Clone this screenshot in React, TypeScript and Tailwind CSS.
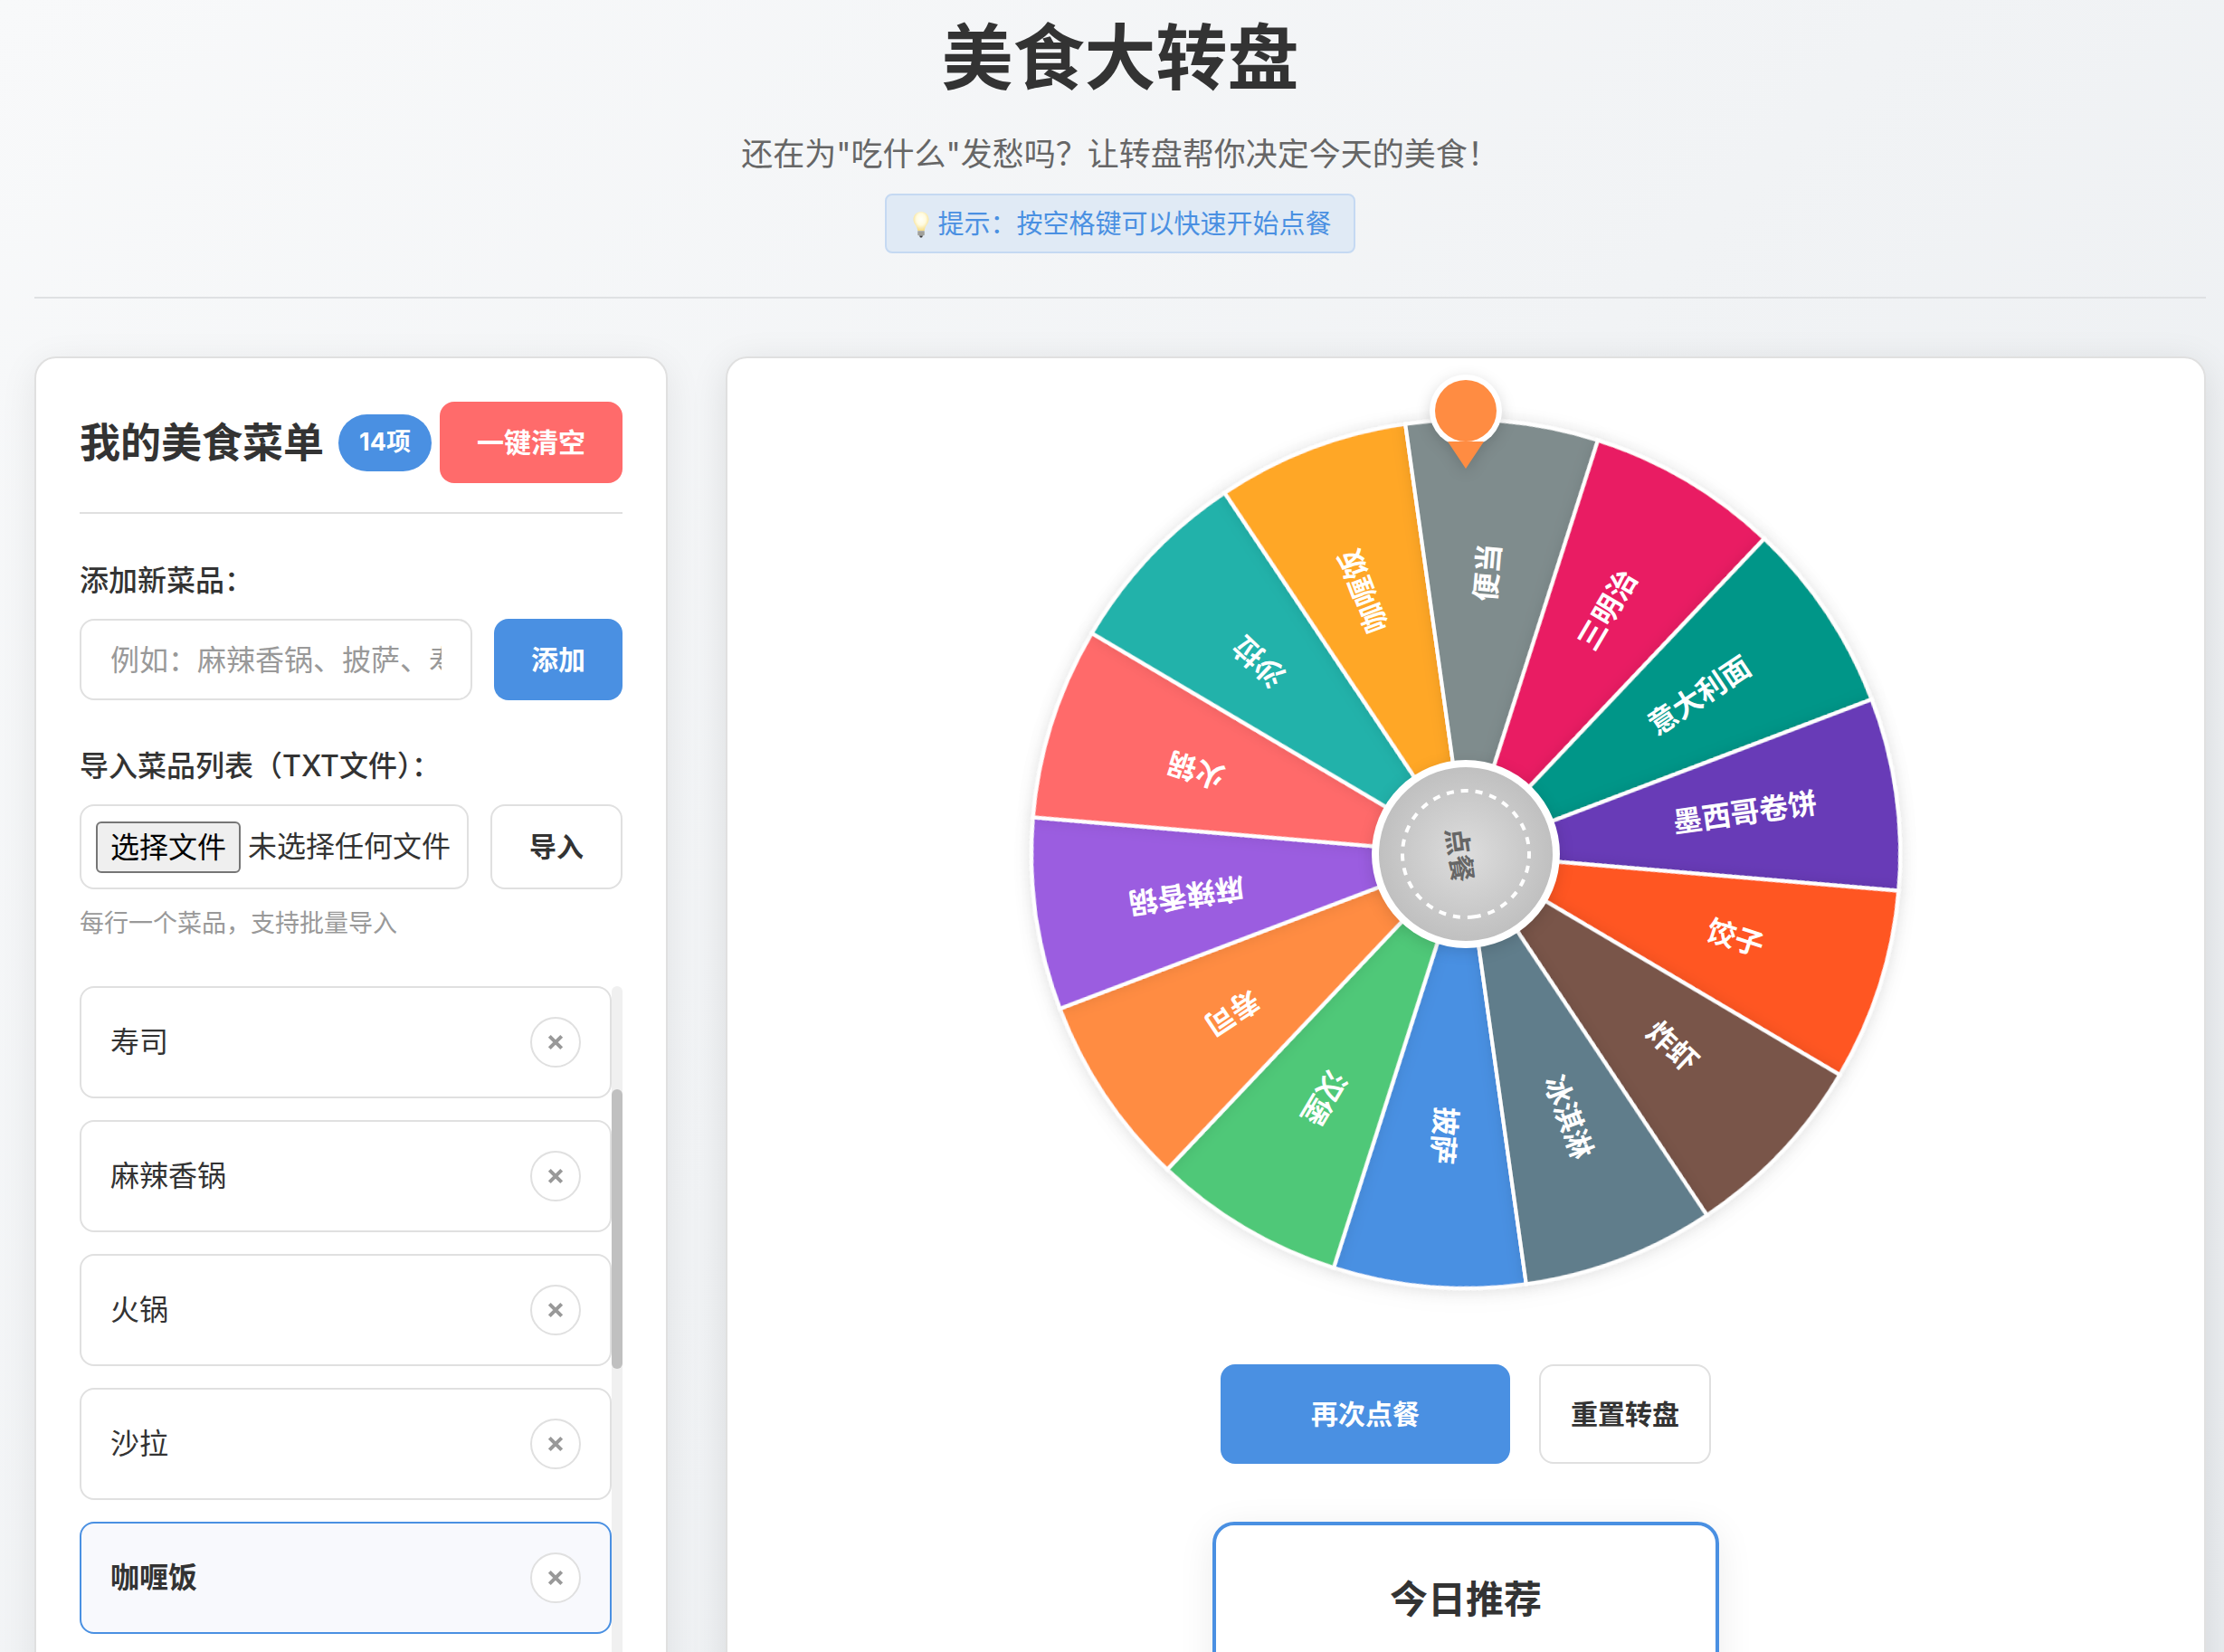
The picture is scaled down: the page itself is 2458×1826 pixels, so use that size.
import { useEffect, useRef, useState } from 'react';

const MENU: { name: string; color: string }[] = [
  { name: '披萨', color: '#4a90e2' },
  { name: '汉堡', color: '#50c878' },
  { name: '寿司', color: '#ff8c42' },
  { name: '麻辣香锅', color: '#9b5de0' },
  { name: '火锅', color: '#ff6b6b' },
  { name: '沙拉', color: '#20b2aa' },
  { name: '咖喱饭', color: '#ffa726' },
  { name: '便当', color: '#7f8c8d' },
  { name: '三明治', color: '#e91e63' },
  { name: '意大利面', color: '#009688' },
  { name: '墨西哥卷饼', color: '#673ab7' },
  { name: '饺子', color: '#ff5722' },
  { name: '炸虾', color: '#795548' },
  { name: '冰淇淋', color: '#607d8b' },
];

const SLICE = 360 / MENU.length;
const WHEEL_RADIUS = 480;

function polar(radius: number, degrees: number) {
  const rad = (degrees * Math.PI) / 180;
  return { x: radius * Math.cos(rad), y: radius * Math.sin(rad) };
}

function slicePath(index: number) {
  const a = polar(WHEEL_RADIUS, index * SLICE);
  const b = polar(WHEEL_RADIUS, (index + 1) * SLICE);
  return `M0 0L${a.x} ${a.y}A${WHEEL_RADIUS} ${WHEEL_RADIUS} 0 0 1 ${b.x} ${b.y}Z`;
}

function BulbIcon() {
  return (
    <svg className="w-7 h-8 shrink-0" viewBox="0 0 20 32" aria-hidden="true">
      <defs>
        <radialGradient id="bulb" cx="0.5" cy="0.4" r="0.6">
          <stop offset="0" stopColor="#fffff8" />
          <stop offset="0.5" stopColor="#fffbe0" />
          <stop offset="1" stopColor="#f6dc84" />
        </radialGradient>
      </defs>
      <path d="M10 2C5 2 1.500 5.800 1.500 10.600C1.500 15.500 5.600 17.500 6.300 23H13.700C14.400 17.500 18.500 15.500 18.500 10.600C18.500 5.800 15 2 10 2Z" fill="url(#bulb)" />
      <path d="M6.300 23H13.700V27C13.700 28 13 28.500 12.500 28.500H7.500C7 28.500 6.300 28 6.300 27Z" fill="#b4b4b0" />
      <path d="M6.300 25H13.700M6.300 27H13.700" stroke="#84847c" strokeWidth="0.800" />
      <path d="M8 28.500H12L11 30.500H9Z" fill="#3c3c3c" />
    </svg>
  );
}

function Wheel({ rotation }: { rotation: number }) {
  return (
    <svg className="w-[960px] max-w-full overflow-visible" viewBox="-480 -480 960 960" role="img" aria-label="美食大转盘">
      <defs>
        <radialGradient id="hub">
          <stop offset="0" stopColor="#dddddd" />
          <stop offset="1" stopColor="#c0c0c0" />
        </radialGradient>
        <filter id="slice-shadow" x="-20%" y="-20%" width="140%" height="140%">
          <feDropShadow dx="0" dy="0" stdDeviation="8" floodColor="#000" floodOpacity="0.1" />
        </filter>
      </defs>
      <circle r="480" fill="#fff" className="drop-shadow-[0_8px_12px_rgba(0,0,0,0.04)]" />
      <g transform={`rotate(${rotation})`}>
        {MENU.map((item, i) => (
          <path key={item.name} d={slicePath(i)} fill={item.color} stroke="#fff" strokeWidth="4" filter="url(#slice-shadow)" />
        ))}
        {MENU.map((item, i) => (
          <g key={item.name} transform={`rotate(${(i + 0.5) * SLICE})`}>
            <text x="312" y="9" textAnchor="middle" fill="#fff" className="text-[32px] font-bold">{item.name}</text>
          </g>
        ))}
      </g>
      <circle r="104" fill="#fff" className="drop-shadow-[0_4px_8px_rgba(0,0,0,0.12)]" />
      <g transform={`rotate(${rotation})`}>
        <circle r="96" fill="url(#hub)" />
        <circle r="70" fill="none" stroke="#fff" strokeWidth="4" strokeDasharray="8 8" />
        <text y="18" textAnchor="middle" fill="#666" className="text-[30px] font-bold">点餐</text>
      </g>
    </svg>
  );
}

function Pointer() {
  return (
    <svg className="absolute left-1/2 -top-[50px] w-20 h-[104px] -translate-x-1/2 overflow-visible drop-shadow-[0_4px_8px_rgba(0,0,0,0.15)]" viewBox="0 0 80 104" aria-hidden="true">
      <circle cx="40" cy="40" r="40" fill="#fff" />
      <circle cx="40" cy="40" r="34" fill="#ff8c42" />
      <path d="M20 74H60L40 104Z" fill="#ff8c42" />
    </svg>
  );
}

function MenuRow({ name, active }: { name: string; active: boolean }) {
  return (
    <li
      className={`flex items-center justify-between h-[124px] shrink-0 px-8 border-2 rounded-2xl text-[32px] text-[#333] ${
        active ? 'border-[#4a90e2] bg-[#f8f9fd] font-bold' : 'border-[#e0e0e0] bg-white'
      }`}
    >
      <span>{name}</span>
      <button type="button" aria-label={`删除${name}`} className="flex items-center justify-center size-14 rounded-full border-2 border-[#e0e0e0] bg-white text-[#999]">
        <svg className="size-5" viewBox="0 0 20 20" stroke="currentColor" strokeWidth="4" aria-hidden="true">
          <path d="M3.300 3.300L16.700 16.700M16.700 3.300L3.300 16.700" />
        </svg>
      </button>
    </li>
  );
}

function MenuList() {
  const listRef = useRef<HTMLUListElement>(null);
  const [thumb, setThumb] = useState({ top: 0, size: 100 });

  const updateThumb = () => {
    const el = listRef.current;
    if (!el) return;
    setThumb({ top: (el.scrollTop / el.scrollHeight) * 100, size: (el.clientHeight / el.scrollHeight) * 100 });
  };

  useEffect(() => {
    const el = listRef.current;
    if (!el) return;
    const third = el.children[2] as HTMLElement;
    el.scrollTop = third.offsetTop - el.offsetTop;
    updateThumb();
  }, []);

  return (
    <div className="flex mt-12">
      <ul ref={listRef} onScroll={updateThumb} className="flex flex-col flex-1 gap-6 pb-6 max-h-[800px] overflow-y-auto [scrollbar-width:none]">
        {MENU.map((item) => (
          <MenuRow key={item.name} name={item.name} active={item.name === '咖喱饭'} />
        ))}
      </ul>
      <div className="relative w-3 rounded-full bg-[#f0f0f0]">
        <div className="absolute inset-x-0 rounded-full bg-[#c0c0c0]" style={{ top: `${thumb.top}%`, height: `${thumb.size}%` }} />
      </div>
    </div>
  );
}

function MenuPanel() {
  return (
    <section className="min-w-0 p-12 bg-white border-2 border-[#e0e0e0] rounded-3xl shadow-[0_8px_40px_rgba(0,0,0,0.08)]">
      <div className="flex items-center justify-between pb-8 border-b-2 border-[#e0e0e0]">
        <div className="flex items-center gap-4">
          <h2 className="text-[45px] leading-none font-bold whitespace-nowrap">我的美食菜单</h2>
          <span className="flex items-center h-[63px] px-[23px] rounded-full bg-[#4a90e2] text-white text-[27px] font-bold whitespace-nowrap">14项</span>
        </div>
        <button type="button" className="h-[90px] px-[41px] rounded-2xl bg-[#ff6b6b] text-white text-[30px] font-bold whitespace-nowrap">一键清空</button>
      </div>

      <label htmlFor="dish" className="block mt-12 text-[32px] leading-[52px] font-medium">添加新菜品：</label>
      <div className="flex gap-6 mt-4">
        <input id="dish" type="text" placeholder="例如：麻辣香锅、披萨、寿司" className="flex-1 min-w-0 h-[90px] px-8 border-2 border-[#e0e0e0] rounded-2xl bg-white text-[32px] placeholder:text-[#999]" />
        <button type="button" className="h-[90px] px-[41px] rounded-2xl bg-[#4a90e2] text-white text-[30px] font-bold whitespace-nowrap">添加</button>
      </div>

      <label htmlFor="dish-file" className="block mt-[47px] text-[32px] leading-[52px] font-medium">导入菜品列表（TXT文件）：</label>
      <div className="flex gap-6 mt-4">
        <div className="relative flex items-center flex-1 min-w-0 h-[94px] px-4 gap-2 border-2 border-[#e0e0e0] rounded-2xl overflow-hidden text-[32px] whitespace-nowrap">
          <span className="px-3.5 border-2 border-[#767676] rounded-md bg-[#efefef] text-black leading-[53px]">选择文件</span>
          <span>未选择任何文件</span>
          <input id="dish-file" type="file" accept=".txt" className="absolute inset-0 w-full opacity-0" />
        </div>
        <button type="button" className="h-[94px] px-[41px] border-2 border-[#e0e0e0] rounded-2xl bg-white text-[30px] font-bold whitespace-nowrap">导入</button>
      </div>
      <p className="mt-4 text-[27px] leading-[43px] text-[#999]">每行一个菜品，支持批量导入</p>

      <MenuList />
    </section>
  );
}

function WheelPanel() {
  return (
    <section className="flex flex-col items-center min-w-0 px-12 pt-[68px] pb-12 bg-white border-2 border-[#e0e0e0] rounded-3xl shadow-[0_8px_40px_rgba(0,0,0,0.1)]">
      <div className="relative">
        <Wheel rotation={82} />
        <Pointer />
      </div>
      <div className="flex gap-8 mt-[84px]">
        <button type="button" className="w-80 h-[110px] rounded-2xl bg-[#4a90e2] text-white text-[30px] font-bold">再次点餐</button>
        <button type="button" className="h-[110px] px-[33px] border-2 border-[#e0e0e0] rounded-2xl bg-white text-[30px] font-bold">重置转盘</button>
      </div>
      <div className="w-[560px] max-w-full mt-16 pt-12 pb-12 border-4 border-[#4a90e2] rounded-3xl bg-white text-center shadow-[0_8px_40px_rgba(0,0,0,0.08)]">
        <h3 className="text-[42px] leading-[67px] font-bold">今日推荐</h3>
        <p className="mt-6 text-[56px] font-bold text-[#4a90e2]">咖喱饭</p>
      </div>
    </section>
  );
}

export default function App() {
  return (
    <div className="h-screen overflow-hidden bg-linear-135 from-[#f8f9fa] to-[#eaedf0] text-[#333] font-['Inter','Noto_Sans_CJK_SC',sans-serif]">
      <div className="pl-[38px] pr-5">
        <header className="flex flex-col items-center pb-12 border-b-2 border-[#dfe1e3]">
          <h1 className="text-[79px] leading-[128px] font-bold">美食大转盘</h1>
          <p className="mt-3.5 text-[35px] leading-[56px] text-[#666]">还在为"吃什么"发愁吗？让转盘帮你决定今天的美食！</p>
          <p className="flex items-center gap-1 h-[66px] mt-4 px-6 pt-0.5 border-2 border-[#c5d9f2] rounded-lg bg-[#e0eaf5] text-[29px] text-[#4a90e2]">
            <BulbIcon />
            提示：按空格键可以快速开始点餐
          </p>
        </header>

        <main className="grid grid-cols-[700px_1fr] items-start gap-16 mt-16">
          <MenuPanel />
          <WheelPanel />
        </main>
      </div>
    </div>
  );
}
